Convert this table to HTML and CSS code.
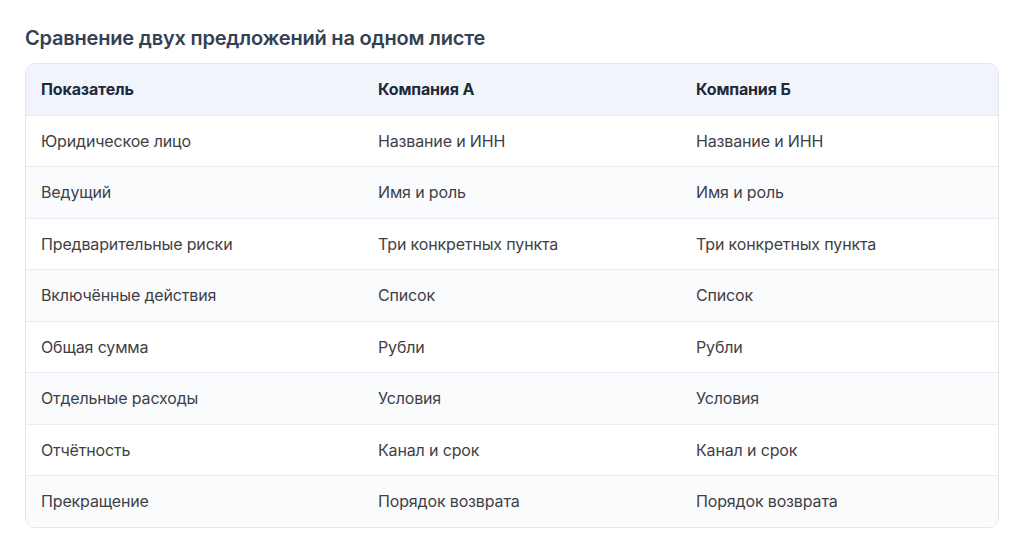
FILE: index.html
```html
<!DOCTYPE html>
<html lang="ru">
<head>
<meta charset="utf-8">
<link rel="stylesheet" href="styles.css">
</head>
<body>
<main class="page">
  <h1 class="title">Сравнение двух предложений на одном листе</h1>
  <div class="card">
    <table class="cmp">
      <colgroup><col class="c1"><col class="c2"><col class="c3"></colgroup>
      <thead>
        <tr><th>Показатель</th><th>Компания А</th><th>Компания Б</th></tr>
      </thead>
      <tbody>
        <tr><td>Юридическое лицо</td><td>Название и ИНН</td><td>Название и ИНН</td></tr>
        <tr><td>Ведущий</td><td>Имя и роль</td><td>Имя и роль</td></tr>
        <tr><td>Предварительные риски</td><td>Три конкретных пункта</td><td>Три конкретных пункта</td></tr>
        <tr><td>Включённые действия</td><td>Список</td><td>Список</td></tr>
        <tr><td>Общая сумма</td><td>Рубли</td><td>Рубли</td></tr>
        <tr><td>Отдельные расходы</td><td>Условия</td><td>Условия</td></tr>
        <tr><td>Отчётность</td><td>Канал и срок</td><td>Канал и срок</td></tr>
        <tr><td>Прекращение</td><td>Порядок возврата</td><td>Порядок возврата</td></tr>
      </tbody>
    </table>
  </div>
</main>
</body>
</html>
```
FILE: styles.css
```css
html, body { margin: 0; padding: 0; background: #ffffff; }
body { font-family: Inter, "Noto Sans", sans-serif; color: #374151; }
.page { padding: 24px 25px 0 25px; }
.title { margin: 0 0 11px 0; font-size: 20px; line-height: 28px; font-weight: 600; color: #334155; letter-spacing: -0.2px; }
.card { width: 974px; box-sizing: border-box; border: 1px solid #e2e8f0; border-radius: 10px; overflow: hidden; }
.cmp { width: 100%; border-collapse: collapse; table-layout: fixed; }
.c1 { width: 337px; }
.c2 { width: 318px; }
.c3 { width: auto; }
.cmp th, .cmp td { text-align: left; padding: 15px 16px 15px 15px; font-size: 16px; line-height: 20.5px; letter-spacing: -0.15px; }
.cmp th { background: #f1f5fb; font-weight: 700; color: #1e293b; }
.cmp td { color: #3f3f46; font-weight: 400; border-top: 1px solid #e8edf3; }
.cmp tbody tr:nth-child(even) td { background: #fafbfd; }
```
